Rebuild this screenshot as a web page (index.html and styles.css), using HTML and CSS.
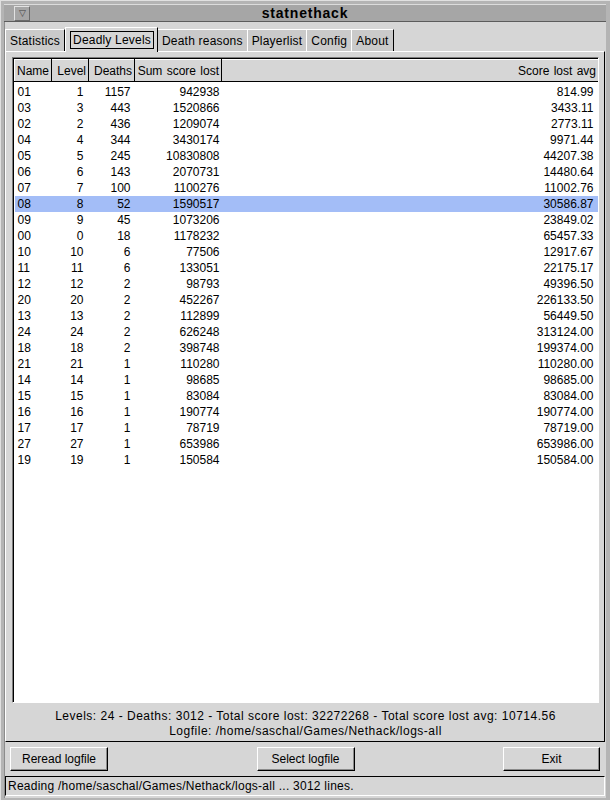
FILE: index.html
```html
<!DOCTYPE html>
<html lang="en">
<head>
  <meta charset="UTF-8" />
  <title>statnethack</title>
  <link rel="stylesheet" href="styles.css">
</head>
<body>
  <div class="window">
    <div class="titlebar">
      <span class="menu-btn">&#9661;</span>
      <span class="title">statnethack</span>
    </div>

    <div class="client">
      <div class="tabs">
        <div class="tab">Statistics</div>
        <div class="tab active"><span class="focus">Deadly Levels</span></div>
        <div class="tab">Death reasons</div>
        <div class="tab">Playerlist</div>
        <div class="tab">Config</div>
        <div class="tab">About</div>
      </div>

      <div class="pane">
        <div class="table-frame">
          <table class="levels">
            <colgroup>
              <col style="width:37px">
              <col style="width:37px">
              <col style="width:46px">
              <col style="width:87px">
              <col>
            </colgroup>
            <thead>
              <tr>
                <th class="left">Name</th>
                <th>Level</th>
                <th>Deaths</th>
                <th>Sum score lost</th>
                <th class="right">Score lost avg</th>
              </tr>
            </thead>
            <tbody id="rows"></tbody>
          </table>
        </div>
        <div class="summary">
          <div>Levels: 24 - Deaths: 3012 - Total score lost: 32272268 - Total score lost avg: 10714.56</div>
          <div>Logfile: /home/saschal/Games/Nethack/logs-all</div>
        </div>
      </div>

      <div class="buttons">
        <button class="btn">Reread logfile</button>
        <button class="btn">Select logfile</button>
        <button class="btn">Exit</button>
      </div>

      <div class="status">Reading /home/saschal/Games/Nethack/logs-all ... 3012 lines.</div>
    </div>
  </div>

  <script>
    const levels = [
      ["01", 1, 1157, 942938, "814.99"],
      ["03", 3, 443, 1520866, "3433.11"],
      ["02", 2, 436, 1209074, "2773.11"],
      ["04", 4, 344, 3430174, "9971.44"],
      ["05", 5, 245, 10830808, "44207.38"],
      ["06", 6, 143, 2070731, "14480.64"],
      ["07", 7, 100, 1100276, "11002.76"],
      ["08", 8, 52, 1590517, "30586.87"],
      ["09", 9, 45, 1073206, "23849.02"],
      ["00", 0, 18, 1178232, "65457.33"],
      ["10", 10, 6, 77506, "12917.67"],
      ["11", 11, 6, 133051, "22175.17"],
      ["12", 12, 2, 98793, "49396.50"],
      ["20", 20, 2, 452267, "226133.50"],
      ["13", 13, 2, 112899, "56449.50"],
      ["24", 24, 2, 626248, "313124.00"],
      ["18", 18, 2, 398748, "199374.00"],
      ["21", 21, 1, 110280, "110280.00"],
      ["14", 14, 1, 98685, "98685.00"],
      ["15", 15, 1, 83084, "83084.00"],
      ["16", 16, 1, 190774, "190774.00"],
      ["17", 17, 1, 78719, "78719.00"],
      ["27", 27, 1, 653986, "653986.00"],
      ["19", 19, 1, 150584, "150584.00"]
    ];

    const tbody = document.getElementById('rows');
    levels.forEach(row => {
      const tr = document.createElement('tr');
      if (row[0] === '08') tr.className = 'selected';
      row.forEach((val, i) => {
        const td = document.createElement('td');
        td.textContent = val;
        td.className = 'c' + i;
        tr.appendChild(td);
      });
      tbody.appendChild(tr);
    });
  </script>
</body>
</html>
```

FILE: styles.css
```css
html, body {
  margin: 0;
  padding: 0;
}
body {
  font-family: "Liberation Sans", Arial, sans-serif;
  font-size: 12px;
  color: #000;
  background: #b4b4b4;
}
.window {
  width: 610px;
  height: 800px;
  box-sizing: border-box;
  padding: 3px 4px 4px 3px;
  display: flex;
  flex-direction: column;
  border-left: 1px solid #e0e0e0;
  border-top: 1px solid #e0e0e0;
}

/* Title bar */
.titlebar {
  height: 17px;
  background: #a6a6a6;
  border-top: 1px solid #dcdcdc;
  border-bottom: 1px solid #5c5c5c;
  position: relative;
  display: flex;
  align-items: center;
  justify-content: center;
}
.menu-btn {
  position: absolute;
  left: 10px;
  top: 1px;
  width: 14px;
  height: 13px;
  border: 1px solid;
  border-color: #e2e2e2 #6a6a6a #6a6a6a #e2e2e2;
  font-size: 9px;
  line-height: 13px;
  text-align: center;
  color: #444;
}
.title {
  font-weight: bold;
  font-size: 14px;
  letter-spacing: 0.8px;
}

/* Client area */
.client {
  flex: 1;
  background: #d6d6d6;
  display: flex;
  flex-direction: column;
  border-left: 1px solid #8c8c8c;
}

.tabs {
  display: flex;
  align-items: flex-end;
  height: 25px;
  margin-top: 4px;
}
.tab {
  height: 22px;
  line-height: 22px;
  padding: 0 4px;
  letter-spacing: 0.2px;
  background: #cacaca;
  border-left: 1px solid #fff;
  border-top: 1px solid #fff;
  border-right: 1px solid #000;
  box-sizing: border-box;
}
.tab:nth-child(n+3) {
  margin-left: -1px;
}
.tab.active {
  height: 25px;
  background: #d6d6d6;
  padding: 3px 3px 0 4px;
  line-height: 16px;
  position: relative;
  top: 1px;
}
.tab.active .focus {
  display: block;
  border: 1px solid #000;
  padding: 0 2px;
  height: 16px;
}

.pane {
  flex: 1;
  margin: 0 1px 0 0;
  border-top: 1px solid #fff;
  border-left: 1px solid #fff;
  border-right: 1px solid #000;
  border-bottom: 1px solid #000;
  padding: 5px 5px 2px 6px;
  display: flex;
  flex-direction: column;
}
.table-frame {
  height: 646px;
  box-sizing: border-box;
  background: #fff;
  border: 1px solid;
  border-color: #7c7c7c #fff #fff #7c7c7c;
  box-shadow: inset 1px 1px 0 #000;
  padding: 1px 0 0 1px;
  overflow: hidden;
}
.levels {
  width: 585px;
  table-layout: fixed;
  border-collapse: collapse;
}
.levels th {
  height: 21px;
  padding: 0 2px;
  font-weight: normal;
  text-align: right;
  background: #d6d6d6;
  border-left: 1px solid #fff;
  border-top: 1px solid #fff;
  border-right: 1px solid #000;
  border-bottom: 1px solid #000;
  white-space: nowrap;
  word-spacing: 1px;
}
.levels th.left {
  text-align: left;
}
.levels td {
  height: 16px;
  padding: 0;
  line-height: 16px;
  text-align: right;
  white-space: nowrap;
}
.levels tbody tr:first-child td {
  height: 17px;
  padding-top: 1px;
}
.levels td.c0 {
  text-align: left;
  padding-left: 3px;
}
.levels td.c1 { padding-right: 5px; }
.levels td.c2 { padding-right: 4px; }
.levels td.c3 { padding-right: 2px; }
.levels td.c4 { padding-right: 5px; }
.levels tr.selected td {
  background: #a3bdf7;
}

.summary {
  text-align: center;
  line-height: 15px;
  padding-top: 6px;
  letter-spacing: 0.5px;
}

.buttons {
  display: flex;
  justify-content: space-between;
  padding: 0 6px 0 5px;
  margin-top: 5px;
}
.btn {
  font-family: "Liberation Sans", Arial, sans-serif;
  font-size: 12px;
  width: 98px;
  height: 24px;
  background: #d6d6d6;
  border: 1px solid;
  border-color: #fff #000 #000 #fff;
  box-shadow: inset -1px -1px 0 #8a8a8a;
  padding: 0;
  color: #000;
}
.btn:last-child {
  width: 97px;
}

.status {
  margin: 5px 1px 2px 0;
  height: 18px;
  line-height: 18px;
  padding-left: 2px;
  letter-spacing: 0.25px;
  border: 1px solid;
  border-color: #000 #fff #fff #000;
  white-space: nowrap;
}
```
